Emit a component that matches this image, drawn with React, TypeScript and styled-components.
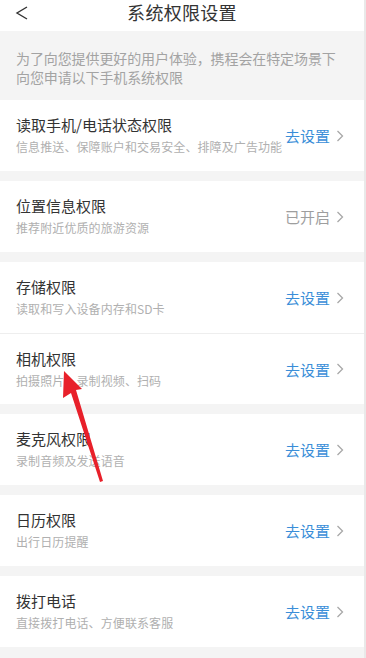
import React from 'react'
import styled, { createGlobalStyle } from 'styled-components'

const GlobalStyle = createGlobalStyle`
  html, body {
    margin: 0;
    padding: 0;
    background: #f2f2f2;
  }
  body {
    font-family: "Noto Sans CJK SC", "Noto Sans", sans-serif;
  }
`

const Page = styled.div`
  position: relative;
  width: 364px;
  min-height: 658px;
  background: #f4f4f4;
  border-right: 2px solid #e9e9e9;
`

const Header = styled.div`
  position: relative;
  height: 31px;
  padding-top: 1px;
  box-sizing: border-box;
  background: #ffffff;
  display: flex;
  justify-content: center;
`

const BackButton = styled.div`
  position: absolute;
  left: 14px;
  top: 2px;
  width: 16px;
  height: 16px;
`

const Title = styled.div`
  font-size: 18px;
  line-height: 22px;
  color: #333333;
  letter-spacing: 0.3px;
`

const Intro = styled.div`
  padding: 18px 16px 13px;
  font-size: 14px;
  line-height: 19px;
  color: #a3a3a3;
  letter-spacing: -0.1px;
`

const Group = styled.div`
  background: #ffffff;
  margin-bottom: 10px;
`

const Row = styled.div<{ $divider?: boolean }>`
  display: flex;
  align-items: center;
  height: 71px;
  padding: 0 20px 0 16px;
  box-sizing: border-box;
  border-top: ${(p) => (p.$divider ? '1px solid #eeeeee' : 'none')};
`

const Texts = styled.div`
  flex: 1;
  display: flex;
  flex-direction: column;
  gap: 4px;
  margin-top: -1px;
`

const ItemTitle = styled.div`
  font-size: 15px;
  line-height: 20px;
  color: #333333;
`

const ItemDesc = styled.div`
  font-size: 12px;
  line-height: 16px;
  color: #b0b0b0;
  letter-spacing: 0.1px;
  white-space: nowrap;
`

const Action = styled.div<{ $done?: boolean }>`
  display: flex;
  align-items: center;
  gap: 6px;
  font-size: 15px;
  color: ${(p) => (p.$done ? '#9e9e9e' : '#3a8ed8')};
  white-space: nowrap;
`

const Arrow = styled.svg`
  position: absolute;
  left: 0;
  top: 0;
  pointer-events: none;
`

const Chevron = () => (
  <svg width="8" height="12" viewBox="0 0 8 12">
    <path d="M1.5 1 L6.5 6 L1.5 11" fill="none" stroke="#a8a8a8" strokeWidth="1.3" />
  </svg>
)

type Item = { title: string; desc: string; done?: boolean }

const groups: Item[][] = [
  [{ title: '读取手机/电话状态权限', desc: '信息推送、保障账户和交易安全、排障及广告功能' }],
  [{ title: '位置信息权限', desc: '推荐附近优质的旅游资源', done: true }],
  [
    { title: '存储权限', desc: '读取和写入设备内存和SD卡' },
    { title: '相机权限', desc: '拍摄照片、录制视频、扫码' },
  ],
  [{ title: '麦克风权限', desc: '录制音频及发送语音' }],
  [{ title: '日历权限', desc: '出行日历提醒' }],
  [{ title: '拨打电话', desc: '直接拨打电话、方便联系客服' }],
]

const App: React.FC = () => {
  return (
    <Page>
      <GlobalStyle />
      <Header>
        <BackButton>
          <svg width="16" height="16" viewBox="0 0 16 16">
            <path d="M13 2 L3 8 L13 14" fill="none" stroke="#333" strokeWidth="1.4" />
          </svg>
        </BackButton>
        <Title>系统权限设置</Title>
      </Header>

      <Intro>
        为了向您提供更好的用户体验，携程会在特定场景下
        <br />
        向您申请以下手机系统权限
      </Intro>

      {groups.map((items, gi) => (
        <Group key={gi}>
          {items.map((item, i) => (
            <Row key={item.title} $divider={i > 0}>
              <Texts>
                <ItemTitle>{item.title}</ItemTitle>
                <ItemDesc>{item.desc}</ItemDesc>
              </Texts>
              <Action $done={item.done}>
                {item.done ? '已开启' : '去设置'}
                <Chevron />
              </Action>
            </Row>
          ))}
        </Group>
      ))}

      {/* 标注箭头 */}
      <Arrow width="364" height="658" viewBox="0 0 364 658">
        <polygon
          points="64,371 82,389 76,390 103,481 100,482 71,393 63,398"
          fill="#e8202a"
        />
      </Arrow>
    </Page>
  )
}

export default App
